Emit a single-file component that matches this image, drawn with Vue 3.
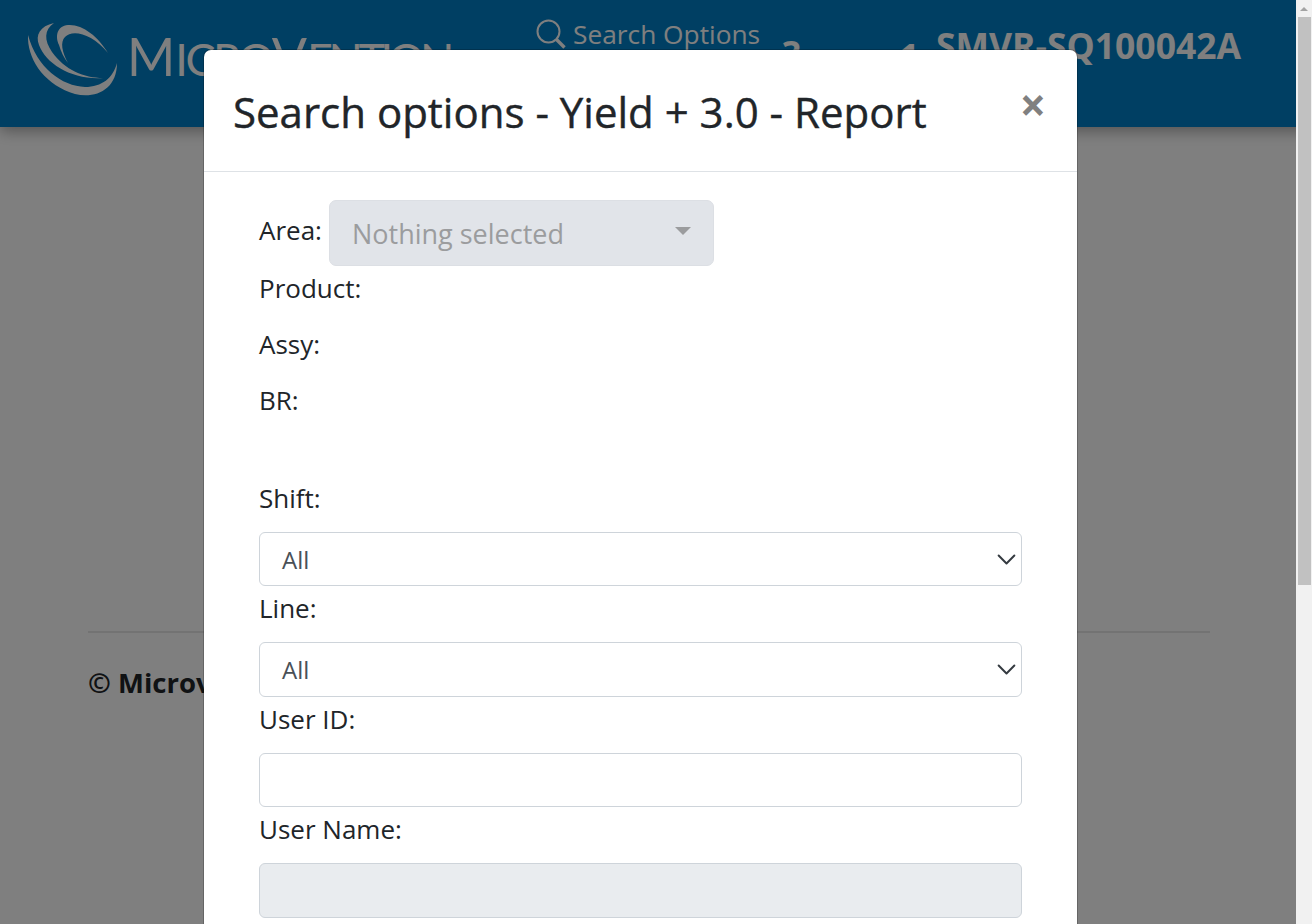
<template>
  <div class="page">
    <header class="top-bar">
      <div class="brand">
        <svg class="swirl" viewBox="28 22 92 74" width="92" height="74">
          <path d="M28 35C27 60 45 85 75 94C95 99 117 90 117 63C113 78 102 87 85 87C62 86 37 68 28 35Z" fill="#fff"/>
          <path d="M54 23C40 26 35 35 39 45C46 64 72 80 103 78C84 78 65 70 52 52C44 40 44 30 54 23Z" fill="#fff"/>
          <path d="M108 53C98 36 82 24 68 25C57 26 55 36 59 45C61 52 64 58 68 63C62 52 60 42 65 37C72 29 92 33 108 53Z" fill="#fff"/>
        </svg>
        <span class="brand-name"><span class="cap">M</span>icro<span class="cap">V</span><span class="tight">ention</span><sup>®</sup></span>
      </div>
      <nav class="top-nav">
        <a class="search-link">
          <svg viewBox="0 0 30 30" width="30" height="30" fill="none" stroke="#fff">
            <circle cx="12.5" cy="12.5" r="11" stroke-width="2"/>
            <path d="M20.5 20.5l8 8" stroke-width="3.4"/>
          </svg>
          Search Options
        </a>
        <span class="nav-glyph help">?</span>
        <span class="nav-glyph user">1</span>
        <span class="machine">SMVR-SQ100042A</span>
      </nav>
    </header>

    <main class="content">
      <footer class="page-foot">© Microv</footer>
    </main>

    <div class="backdrop"></div>

    <section class="modal">
      <div class="modal-head">
        <h5>{{ title }}</h5>
        <span class="close-x">×</span>
      </div>
      <div class="modal-body">
        <div class="area-row">
          <label>Area:</label>
          <div class="picker">
            <span>Nothing selected</span>
            <i class="caret"></i>
          </div>
        </div>
        <div class="plain-row" v-for="name in plainFields" :key="name">{{ name }}:</div>
        <div class="spacer"></div>

        <div class="field" v-for="f in fields" :key="f.label">
          <label>{{ f.label }}:</label>
          <div v-if="f.kind === 'select'" class="control select">
            {{ f.value }}
            <svg viewBox="0 0 16 16" width="21" height="21" fill="none" stroke="#343a40" stroke-width="1.5" stroke-linecap="round" stroke-linejoin="round">
              <path d="M2 5l6 6 6-6"/>
            </svg>
          </div>
          <div v-else class="control" :class="{ disabled: f.kind === 'disabled' }"></div>
        </div>
      </div>
    </section>

    <div class="scrollbar">
      <div class="arrow"></div>
      <div class="thumb"></div>
    </div>
  </div>
</template>

<script setup>
const title = 'Search options - Yield + 3.0 - Report'

const plainFields = ['Product', 'Assy', 'BR']

const fields = [
  { label: 'Shift', kind: 'select', value: 'All' },
  { label: 'Line', kind: 'select', value: 'All' },
  { label: 'User ID', kind: 'input' },
  { label: 'User Name', kind: 'disabled' }
]
</script>

<style>
html, body {
  margin: 0;
  overflow: hidden;
}
</style>

<style scoped>
.page {
  position: relative;
  width: 1312px;
  height: 924px;
  overflow: hidden;
  background: #fff;
  font-family: "Open Sans", "Noto Sans", sans-serif;
  color: #212529;
}

/* Header behind the overlay */
.top-bar {
  height: 127px;
  background: #007ec6;
  box-shadow: 0 4px 14px rgba(0, 0, 0, 0.35);
  display: flex;
  padding: 0 0 0 28px;
  color: #fff;
}

.brand {
  display: flex;
  align-items: flex-start;
  padding-top: 22px;
  gap: 7px;
  width: 508px;
  flex: none;
}

.brand-name {
  font-family: Lato, "Liberation Sans", sans-serif;
  font-size: 45px;
  line-height: 60px;
  letter-spacing: -2.5px;
  text-transform: uppercase;
  padding-top: 4px;
  white-space: nowrap;
}

.brand-name .cap {
  font-size: 52px;
  letter-spacing: 0;
}

.brand-name .tight {
  letter-spacing: -4.5px;
}

.brand-name sup {
  font-size: 12px;
  letter-spacing: 0;
}

.top-nav {
  flex: 1;
  display: flex;
  align-items: flex-start;
}

.search-link {
  display: flex;
  gap: 7px;
  padding-top: 19px;
  font-size: 26.3px;
  line-height: 30px;
  white-space: nowrap;
  width: 247px;
  flex: none;
}

.nav-glyph {
  font-weight: 700;
  font-size: 36px;
  line-height: 48px;
  flex: none;
}

.help {
  width: 116px;
  padding-top: 30px;
}

.user {
  width: 37px;
  padding-top: 33px;
}

.machine {
  font-weight: 700;
  font-size: 35.5px;
  line-height: 48px;
  padding-top: 21px;
  white-space: nowrap;
}

.content {
  margin: 0 102px 0 88px;
  padding-top: 504px;
}

.page-foot {
  border-top: 2px solid #e6e6e6;
  padding-top: 31px;
  font-size: 27.5px;
  font-weight: 700;
}

.backdrop {
  position: absolute;
  inset: 0;
  background: rgba(0, 0, 0, 0.5);
}

/* Dialog */
.modal {
  position: absolute;
  left: 204px;
  top: 50px;
  width: 873px;
  height: 900px;
  background: #fff;
  border-radius: 7px;
  box-shadow: 0 0 0 1px rgba(0, 0, 0, 0.2);
}

.modal-head {
  height: 121px;
  border-bottom: 1px solid #dee2e6;
  display: flex;
  justify-content: space-between;
  padding: 0 31px 0 29px;
}

.modal-head h5 {
  margin: 0;
  padding-top: 34px;
  font-size: 42px;
  font-weight: 500;
  line-height: 56px;
  white-space: nowrap;
  -webkit-text-stroke: 0.4px #212529;
}

.close-x {
  font-size: 46px;
  font-weight: 700;
  line-height: 46px;
  padding-top: 31px;
  color: #808080;
}

.modal-body {
  padding: 28px 55px 0;
  font-size: 26px;
}

.area-row {
  display: flex;
  gap: 7px;
  height: 66px;
}

.area-row label {
  line-height: 60px;
}

.picker {
  width: 385px;
  height: 66px;
  box-sizing: border-box;
  background: #e1e4e9;
  border: 1px solid #dcdfe4;
  border-radius: 7px;
  padding: 0 22px;
  display: flex;
  align-items: center;
  justify-content: space-between;
  font-size: 27px;
  color: #9b9c9e;
}

.caret {
  width: 0;
  height: 0;
  border-left: 8px solid transparent;
  border-right: 8px solid transparent;
  border-top: 8px solid #9b9c9e;
  margin-top: -4px;
}

.plain-row {
  height: 56px;
  line-height: 44px;
}

.spacer {
  height: 42px;
}

.field label {
  display: block;
  line-height: 44px;
  margin-bottom: 12px;
}

.control {
  box-sizing: border-box;
  height: 54.4px;
  width: 763px;
  border: 1px solid #ced4da;
  border-radius: 6px;
  font-size: 24px;
  color: #495057;
  padding: 0 4px 0 22px;
  display: flex;
  align-items: center;
  justify-content: space-between;
}

.control.disabled {
  background: #e9ecef;
}

/* Browser scrollbar */
.scrollbar {
  position: absolute;
  top: 0;
  right: 0;
  width: 16px;
  height: 100%;
  background: #f1f1f1;
}

.arrow {
  width: 0;
  margin: 7px auto 0;
  border-left: 4px solid transparent;
  border-right: 4px solid transparent;
  border-bottom: 4px solid #a3a3a3;
}

.thumb {
  margin: 6px 1px 0 2px;
  height: 568px;
  background: #c1c1c1;
}
</style>
